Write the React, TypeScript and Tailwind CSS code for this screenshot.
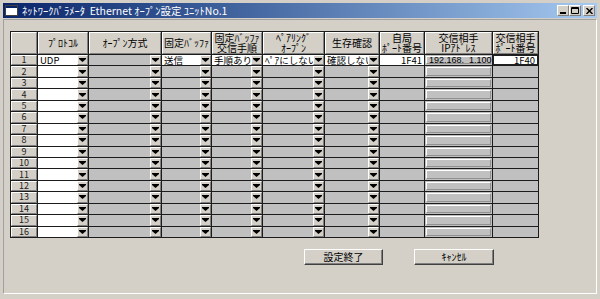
import React from 'react';

const FONT = "font-['Noto_Sans_CJK_JP','Liberation_Sans',sans-serif]";

const raised = 'border border-t-white border-l-white border-r-[#808080] border-b-[#808080]';

const Arrow = () => (
  <svg width="7" height="4" viewBox="0 0 7 4">
    <path d="M0 0H7V1L3.5 4L0 1Z" fill="#000" />
  </svg>
);

const Combo = ({ text, white }: { text?: string; white?: boolean }) => (
  <div className={`flex h-full min-w-0 ${white ? 'bg-white' : 'bg-[#c0c0c0]'}`}>
    <div className="flex-1 min-w-0 overflow-x-clip whitespace-nowrap pl-[2px] text-[9.5px] leading-[9px] flex items-center">
      {text}
    </div>
    <div className={`w-[11px] shrink-0 bg-[#d4d0c8] flex items-center justify-center ${raised}`}>
      <Arrow />
    </div>
  </div>
);

const headers = [
  '',
  'ﾌﾟﾛﾄｺﾙ',
  'ｵｰﾌﾟﾝ方式',
  '固定ﾊﾞｯﾌｧ',
  '固定ﾊﾞｯﾌｧ\n交信手順',
  'ﾍﾟｱﾘﾝｸﾞ\nｵｰﾌﾟﾝ',
  '生存確認',
  '自局\nﾎﾟｰﾄ番号',
  '交信相手\nIPｱﾄﾞﾚｽ',
  '交信相手\nﾎﾟｰﾄ番号',
];

const rows = Array.from({ length: 16 }, (_, i) => i + 1);

const WinBtn = ({ children }: { children: React.ReactNode }) => (
  <div className={`w-[12px] h-[11px] bg-[#d4d0c8] flex items-center justify-center ${raised}`}>{children}</div>
);

export default function App() {
  return (
    <div className={`w-[600px] h-[299px] overflow-hidden bg-[#d4d0c8] flex flex-col pt-[3px] pl-[3px] pr-[3px] pb-[5px] ${FONT}`}>
      {/* title bar */}
      <div className="h-[15px] shrink-0 bg-linear-to-r from-[#0a246a] to-[#a6caf0] flex items-center pl-[2px] pr-[2px]">
        <svg width="13" height="11" viewBox="0 0 13 11" className="mr-[4px]">
          <rect x="0.5" y="0.5" width="12" height="10" fill="#fff" stroke="#404040" />
          <rect x="1" y="1" width="11" height="2" fill="#0a246a" />
        </svg>
        <span className="text-white text-[10.5px] leading-[11px] whitespace-nowrap">
          ﾈｯﾄﾜｰｸﾊﾟﾗﾒｰﾀ&nbsp; Ethernet ｵｰﾌﾟﾝ設定 ﾕﾆｯﾄNo.1
        </span>
        <div className="ml-auto flex items-center">
          <WinBtn>
            <svg width="6" height="7" viewBox="0 0 6 7"><rect x="0" y="5" width="6" height="2" fill="#000" /></svg>
          </WinBtn>
          <WinBtn>
            <svg width="8" height="7" viewBox="0 0 8 7"><path d="M0.5 0.5H7.5V6.5H0.5Z M0.5 1.5H7.5" stroke="#000" fill="none" /></svg>
          </WinBtn>
          <div className="w-[2px]" />
          <WinBtn>
            <svg width="7" height="6" viewBox="0 0 7 6"><path d="M0.5 0L6.5 6M6.5 0L0.5 6" stroke="#000" strokeWidth="1.4" /></svg>
          </WinBtn>
        </div>
      </div>

      {/* client area */}
      <div className="flex-1 mt-[1px] border border-t-[#a0a0a0] border-l-[#a0a0a0] border-r-white border-b-white flex flex-col">
        <div className="ml-[6px] mt-[11px] w-[529px] h-[207px] p-px bg-[#1c1c1c] grid gap-px grid-cols-[26px_50px_72px_49px_50px_61px_54px_44px_67px_45px] grid-rows-[22px_repeat(16,minmax(0,1fr))]">
          {headers.map((h, i) => (
            <div
              key={`h${i}`}
              className={`bg-[#d4d0c8] ${raised} flex items-center justify-center text-center whitespace-pre text-[10px] leading-[10px] text-black`}
            >
              {h}
            </div>
          ))}
          {rows.map((r) => {
            const first = r === 1;
            return (
              <React.Fragment key={r}>
                <div className={`bg-[#d4d0c8] ${raised} flex items-center justify-center text-[9px] leading-[8px] text-[#222]`}>
                  {r}
                </div>
                <Combo white text={first ? 'UDP' : ''} />
                <Combo />
                <Combo white={first} text={first ? '送信' : ''} />
                <Combo white={first} text={first ? '手順あり' : ''} />
                <Combo white={first} text={first ? 'ﾍﾟｱにしない' : ''} />
                <Combo white={first} text={first ? '確認しない' : ''} />
                <div className={`${first ? 'bg-white' : 'bg-[#c0c0c0]'} flex items-center justify-end pr-[2px] text-[9.5px] leading-[8px]`}>
                  {first ? '1F41' : ''}
                </div>
                <div className="bg-[#c0c0c0] p-px">
                  <div className="h-full border border-t-white border-l-white border-r-[#909090] border-b-[#909090] flex items-center pl-[2px] font-['Liberation_Sans',sans-serif] text-[9px] leading-[8px] whitespace-pre">
                    {first ? '192.168.  1.100' : ''}
                  </div>
                </div>
                {first ? (
                  <div className="bg-white border border-[#202020] flex items-center justify-end pr-[2px] text-[9.5px] leading-[8px]">
                    1F40
                  </div>
                ) : (
                  <div className="bg-[#c0c0c0]" />
                )}
              </React.Fragment>
            );
          })}
        </div>

        <div className="mt-[11px] pl-[300px] flex gap-[31px]">
          <button className="w-[79px] h-[16px] bg-[#d4d0c8] border border-t-white border-l-white border-r-[#404040] border-b-[#404040] shadow-[inset_-1px_-1px_0_#808080] text-[10px] leading-[10px] text-black">
            設定終了
          </button>
          <button className="w-[80px] h-[16px] bg-[#d4d0c8] border border-t-white border-l-white border-r-[#404040] border-b-[#404040] shadow-[inset_-1px_-1px_0_#808080] text-[10px] leading-[10px] text-black">
            ｷｬﾝｾﾙ
          </button>
        </div>
      </div>
    </div>
  );
}
